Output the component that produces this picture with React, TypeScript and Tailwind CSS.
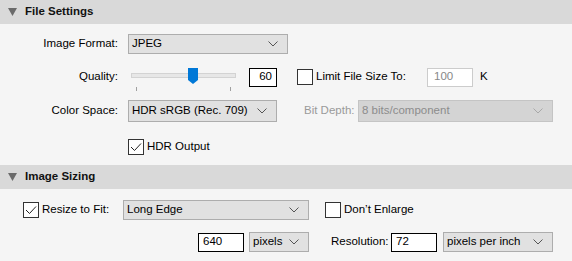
import React from 'react';

const font = { fontFamily: '"Liberation Sans", Arial, sans-serif' };

function Chevron({ color = '#555' }: { color?: string }) {
  return (
    <svg width="10" height="6" viewBox="0 0 10 6" className="shrink-0">
      <path d="M0.5 0.5 L5 5 L9.5 0.5" fill="none" stroke={color} strokeWidth="1" />
    </svg>
  );
}

function Select({
  value,
  width,
  height = 20,
  disabled = false,
}: {
  value: string;
  width: string;
  height?: number;
  disabled?: boolean;
}) {
  return (
    <div
      className={`${width} shrink-0 flex items-center justify-between pl-[3px] pr-[9px] border ${
        disabled
          ? 'bg-[#d4d4d4] border-[#c4c4c4] text-[#8c8c8c]'
          : 'bg-[#e1e1e1] border-[#adadad] text-black'
      }`}
      style={{ height }}
    >
      <span className="leading-none">{value}</span>
      <Chevron color={disabled ? '#a8a8a8' : '#555'} />
    </div>
  );
}

function Checkbox({ checked = false }: { checked?: boolean }) {
  return (
    <div className="w-[16px] h-[16px] border border-[#333] bg-white flex items-center justify-center shrink-0">
      {checked && (
        <svg width="12" height="10" viewBox="0 0 12 10">
          <path d="M1 5 L4.5 8.5 L11 1.5" fill="none" stroke="#222" strokeWidth="1" />
        </svg>
      )}
    </div>
  );
}

function Header({ title }: { title: string }) {
  return (
    <div className="h-[24px] bg-[#d9d9d9] flex items-center pl-[8px]">
      <svg width="9" height="8" viewBox="0 0 9 8">
        <path d="M0 0 L9 0 L4.5 8 Z" fill="#6b6b6b" />
      </svg>
      <span className="ml-[8px] font-bold text-[11.5px] text-[#111]">{title}</span>
    </div>
  );
}

function Slider() {
  return (
    <div className="relative w-[105px] h-[20px] ml-[13px] shrink-0">
      <div className="absolute left-0 right-0 top-[6px] h-[5px] bg-[#e7e7e7] border border-[#d3d3d3]" />
      <svg className="absolute left-[57px] top-[1px]" width="10" height="16" viewBox="0 0 10 16">
        <path d="M0 0 H10 V12 L5 16 L0 12 Z" fill="#0078d7" />
      </svg>
      <div className="absolute left-[5px] top-[20px] w-px h-[4px] bg-[#a0a0a0]" />
      <div className="absolute left-[99px] top-[20px] w-px h-[4px] bg-[#a0a0a0]" />
    </div>
  );
}

export default function App() {
  return (
    <div className="w-[572px] h-[261px] bg-[#f5f5f5] text-[11.5px] text-black overflow-hidden" style={font}>
      <Header title="File Settings" />
      <div className="pt-[10px] pb-[10px]">
        {/* Image Format */}
        <div className="flex items-center h-[20px]">
          <div className="w-[118px] text-right">Image Format:</div>
          <div className="ml-[10px]">
            <Select value="JPEG" width="w-[160px]" />
          </div>
        </div>

        {/* Quality */}
        <div className="flex items-center h-[20px] mt-[13px]">
          <div className="w-[118px] text-right">Quality:</div>
          <Slider />
          <div className="ml-[13px] w-[28px] h-[19px] border border-black bg-white flex items-center justify-end pr-[4px] shrink-0">
            60
          </div>
          <div className="ml-[20px] flex items-center">
            <Checkbox />
            <span className="ml-[3px] w-[111px] whitespace-nowrap">Limit File Size To:</span>
          </div>
          <div className="w-[46px] h-[19px] border border-[#cccccc] bg-white flex items-center pl-[6px] text-[#888] shrink-0">
            100
          </div>
          <span className="ml-[7px]">K</span>
        </div>

        {/* Color Space */}
        <div className="flex items-center h-[22px] mt-[13px]">
          <div className="w-[118px] text-right">Color Space:</div>
          <div className="ml-[10px]">
            <Select value="HDR sRGB (Rec. 709)" width="w-[149px]" height={22} />
          </div>
          <div className="ml-[27px] w-[54px] whitespace-nowrap text-[#9a9a9a]">Bit Depth:</div>
          <Select value="8 bits/component" width="w-[195px]" height={22} disabled />
        </div>

        {/* HDR Output */}
        <div className="flex items-center h-[16px] mt-[17px] pl-[128px]">
          <Checkbox checked />
          <span className="ml-[3px]">HDR Output</span>
        </div>
      </div>

      <Header title="Image Sizing" />
      <div className="pt-[11px]">
        <div className="flex items-center h-[20px] pl-[23px]">
          <Checkbox checked />
          <span className="ml-[3px] w-[81px] whitespace-nowrap">Resize to Fit:</span>
          <Select value="Long Edge" width="w-[186px]" />
          <div className="ml-[16px] flex items-center">
            <Checkbox />
            <span className="ml-[3px]">Don’t Enlarge</span>
          </div>
        </div>

        <div className="flex items-center h-[20px] mt-[12px] pl-[198px]">
          <div className="w-[46px] h-[19px] border border-black bg-white flex items-center pl-[4px] shrink-0">640</div>
          <div className="ml-[5px]">
            <Select value="pixels" width="w-[60px]" />
          </div>
          <div className="ml-[22px] w-[60px] whitespace-nowrap">Resolution:</div>
          <div className="w-[46px] h-[19px] border border-black bg-white flex items-center pl-[4px] shrink-0">72</div>
          <div className="ml-[6px]">
            <Select value="pixels per inch" width="w-[110px]" />
          </div>
        </div>
      </div>
    </div>
  );
}
